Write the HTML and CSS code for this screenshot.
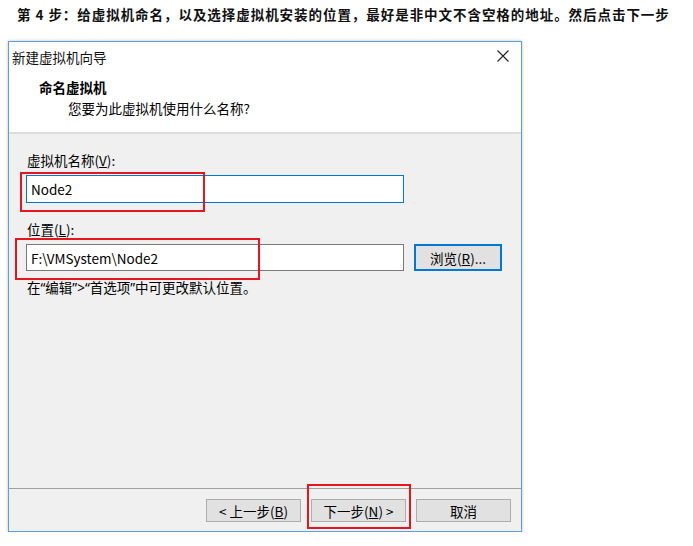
FILE: index.html
```html
<!DOCTYPE html>
<html lang="zh-CN">
<head>
    <meta charset="UTF-8">
    <title>新建虚拟机向导</title>
    <link rel="stylesheet" href="styles.css">
</head>
<body>
    <p class="step-note">第 4 步：给虚拟机命名，以及选择虚拟机安装的位置，最好是非中文不含空格的地址。然后点击下一步</p>

    <div class="wizard">
        <div class="title-bar">
            <span class="title-text">新建虚拟机向导</span>
            <svg class="close-icon" width="12" height="12" viewBox="0 0 12 12">
                <path d="M0.5 0.5 L11.5 11.5 M11.5 0.5 L0.5 11.5" stroke="#222" stroke-width="1.1" fill="none"/>
            </svg>
        </div>

        <div class="wizard-header">
            <div class="header-title">命名虚拟机</div>
            <div class="header-sub">您要为此虚拟机使用什么名称?</div>
        </div>

        <div class="wizard-body">
            <label class="field-label">虚拟机名称(<u>V</u>):</label>
            <div class="text-box focused">Node2</div>

            <label class="field-label second">位置(<u>L</u>):</label>
            <div class="path-row">
                <div class="text-box">F:\VMSystem\Node2</div>
                <button class="win-btn default-btn">浏览(<u>R</u>)...</button>
            </div>
            <p class="hint">在“编辑”&gt;“首选项”中可更改默认位置。</p>
        </div>

        <div class="wizard-footer">
            <button class="win-btn">&lt; 上一步(<u>B</u>)</button>
            <button class="win-btn">下一步(<u>N</u>) &gt;</button>
            <button class="win-btn">取消</button>
        </div>

        <!-- red marks drawn over the screenshot -->
        <div class="mark mark-name"></div>
        <div class="mark mark-path"></div>
        <div class="mark mark-next"></div>
    </div>
</body>
</html>
```

FILE: styles.css
```css
body {
    margin: 0;
    background: #fff;
    font-family: "Noto Sans CJK SC", "Noto Sans", sans-serif;
    color: #000;
}
.step-note {
    margin: 0;
    padding: 5px 0 0 17px;
    height: 36px;
    box-sizing: border-box;
    font-size: 13.5px;
    font-weight: bold;
    line-height: 18px;
    letter-spacing: 0.95px;
    color: #111;
}
.wizard {
    position: relative;
    margin-left: 8px;
    margin-top: 5px;
    width: 514px;
    height: 491px;
    box-sizing: border-box;
    border: 1px solid #5a9fe0;
    box-shadow: 0 0 3px rgba(0, 0, 0, 0.25);
    background: #f0f0f0;
    display: flex;
    flex-direction: column;
    font-size: 13.5px;
    line-height: 18px;
}
.title-bar {
    height: 30px;
    background: #fff;
    display: flex;
    align-items: center;
    justify-content: space-between;
    padding: 0 12px 0 3px;
}
.title-text {
    color: #111;
}
.close-icon {
    margin-top: -2px;
}
.wizard-header {
    height: 62px;
    background: #fff;
    box-sizing: border-box;
    padding: 6px 0 0 30px;
    border-bottom: 2px solid #dcdcdc;
}
.header-title {
    font-weight: bold;
}
.header-sub {
    margin-top: 3px;
    padding-left: 29px;
}
.wizard-body {
    flex: 1;
    padding: 17px 17px 0 17px;
    display: flex;
    flex-direction: column;
}
.field-label {
    padding-left: 1px;
    height: 18px;
    margin-bottom: 6px;
}
.field-label.second {
    margin-top: 17px;
}
.text-box {
    width: 378px;
    height: 28px;
    box-sizing: border-box;
    border: 1px solid #7a7a7a;
    background: #fff;
    padding: 4px 0 0 4px;
}
.text-box.focused {
    border-color: #0078d7;
}
.path-row {
    display: flex;
    gap: 10px;
}
.path-row .text-box {
    height: 27px;
}
.win-btn {
    font: inherit;
    color: #000;
    background: #e1e1e1;
    border: 1px solid #adadad;
    padding: 0;
    margin: 0;
}
.default-btn {
    width: 88px;
    height: 27px;
    border: 2px solid #0078d7;
}
.hint {
    margin: 8px 0 0 1px;
    font-family: "Noto Sans", "Noto Sans CJK SC", sans-serif;
}
.wizard-footer {
    height: 43px;
    box-sizing: border-box;
    border-top: 1px solid #a0a0a0;
    display: flex;
    justify-content: flex-end;
    align-items: flex-start;
    gap: 10px;
    padding: 10px 10px 0 0;
}
.wizard-footer .win-btn {
    width: 95px;
    height: 23px;
}
.mark {
    position: absolute;
    border: 2px solid #e8161c;
}
.mark-name {
    left: 11px;
    top: 130px;
    width: 181px;
    height: 36px;
}
.mark-path {
    left: 6px;
    top: 196px;
    width: 241px;
    height: 38px;
}
.mark-next {
    left: 298px;
    top: 442px;
    width: 100px;
    height: 41px;
}
```
